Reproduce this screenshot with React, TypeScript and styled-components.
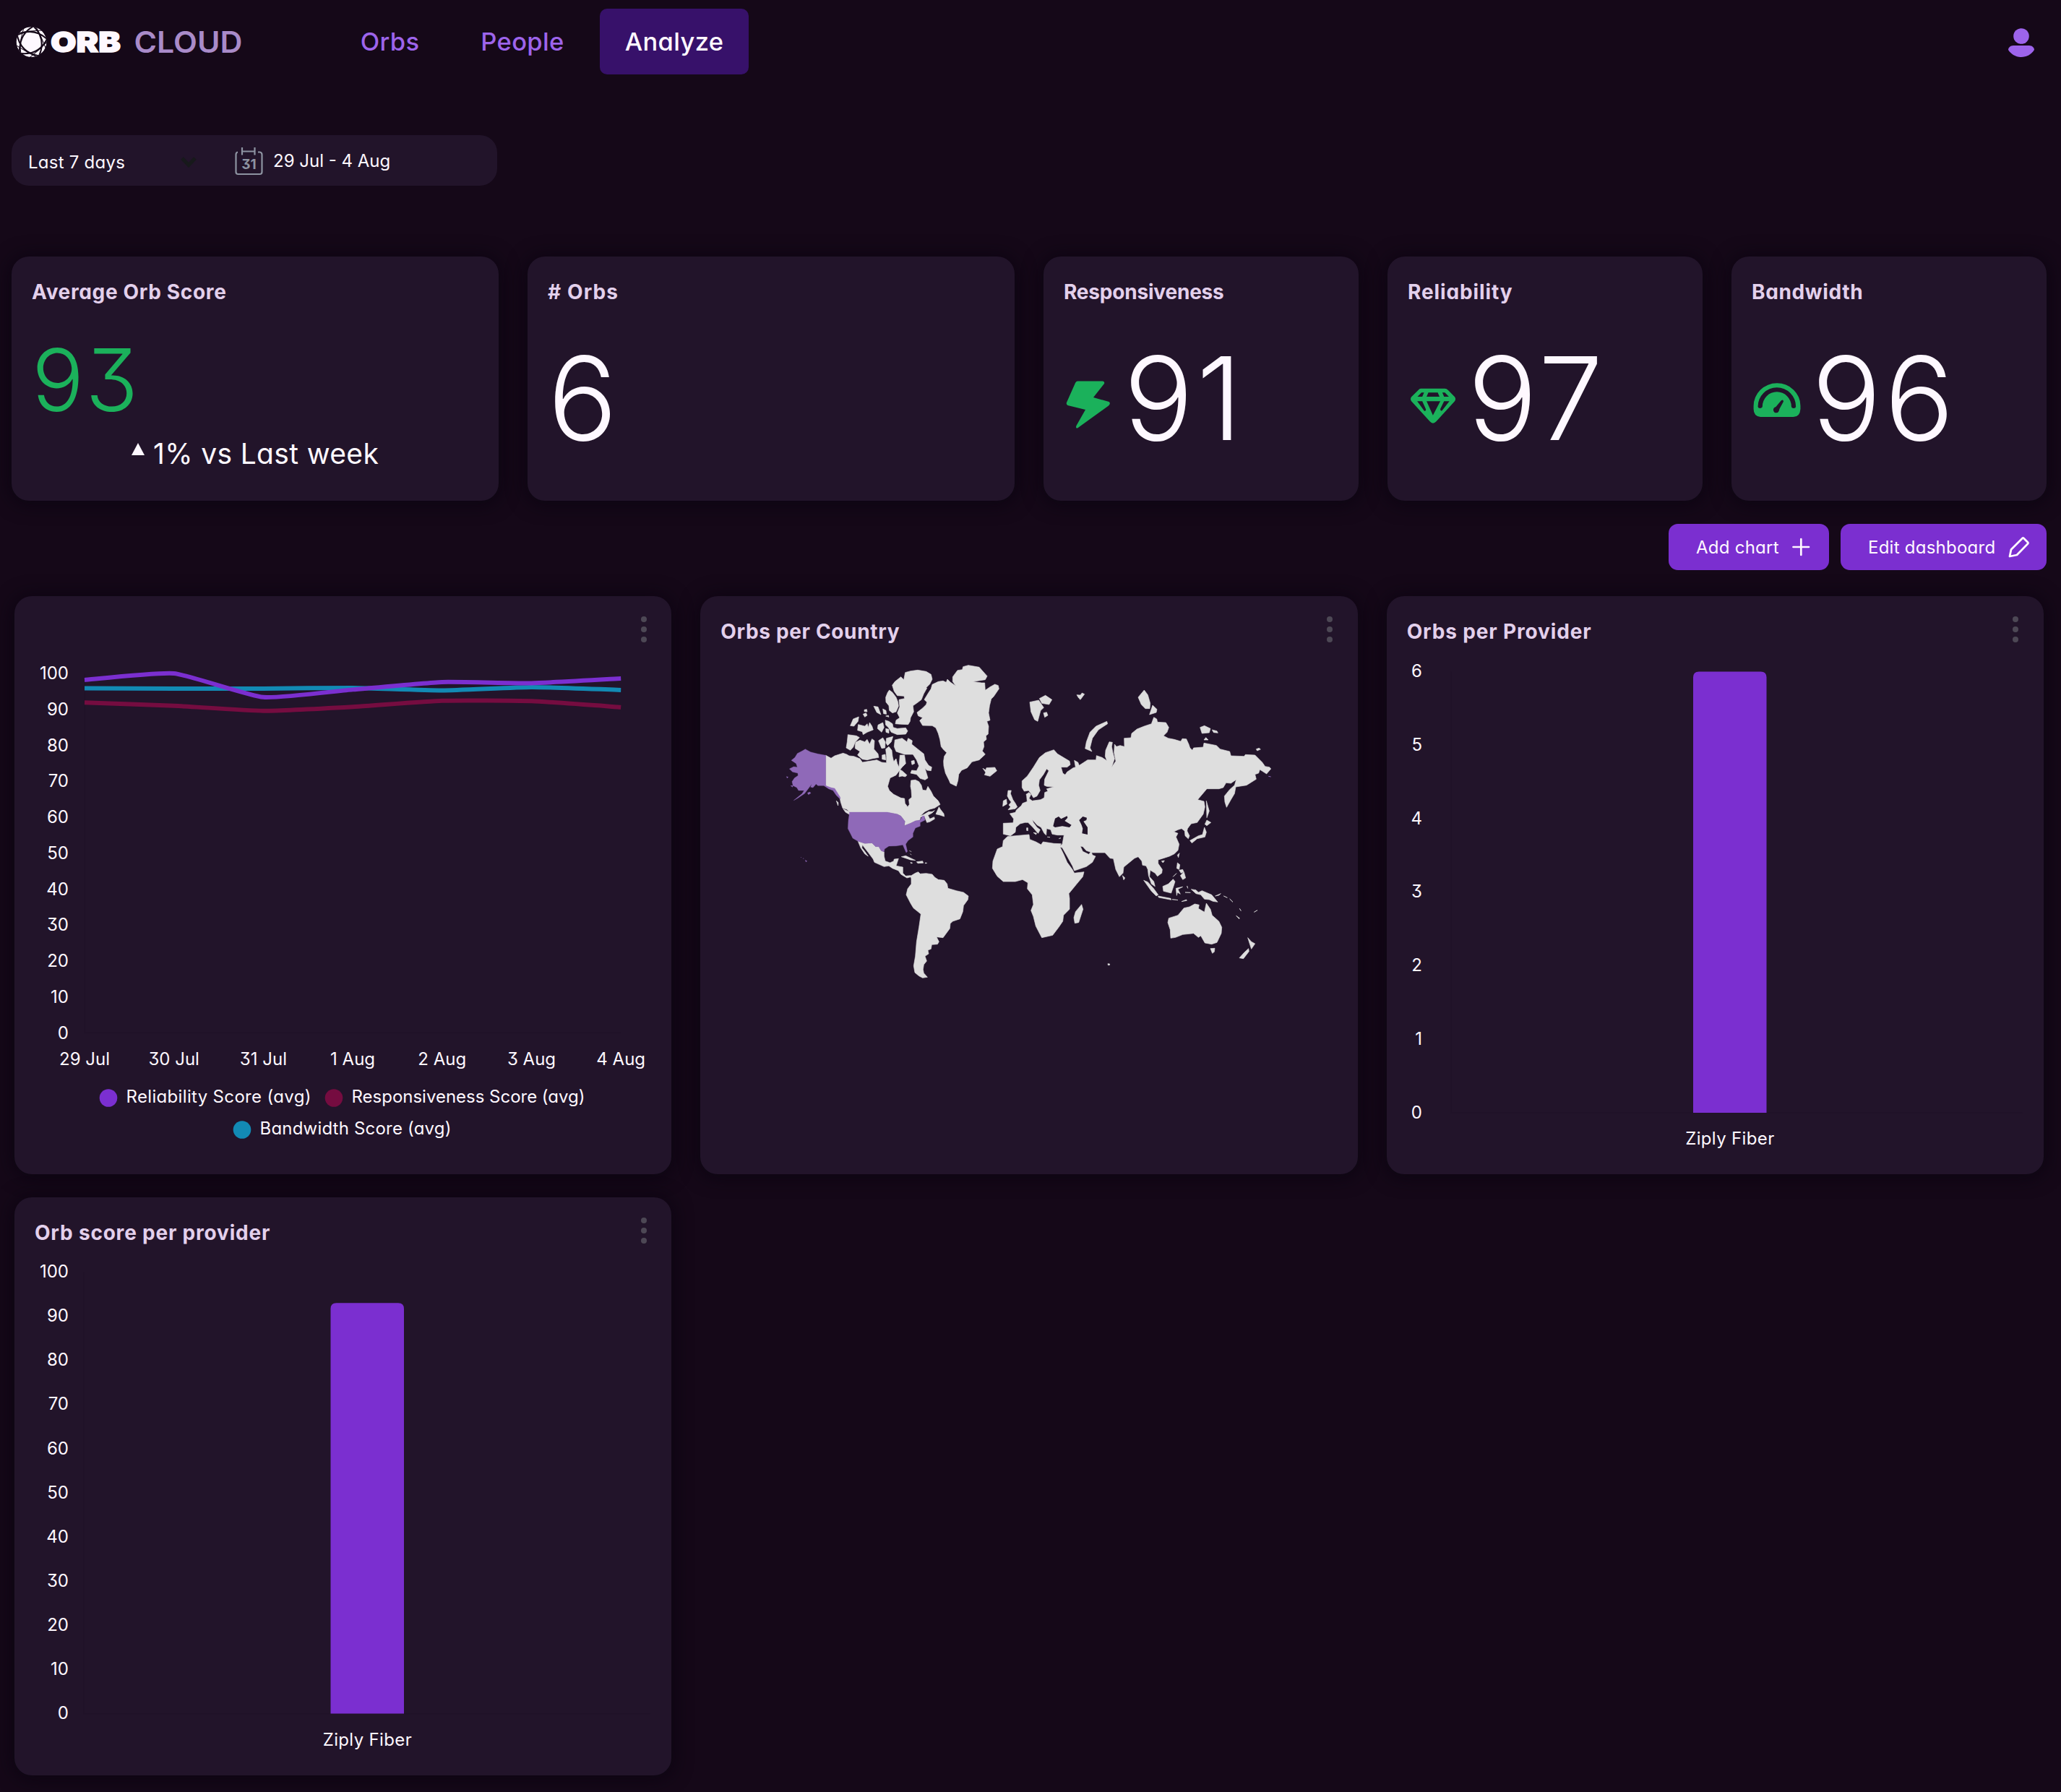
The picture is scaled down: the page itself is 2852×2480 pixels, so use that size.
import React from "react";
import styled, { createGlobalStyle } from "styled-components";

const color = {
  page: "#150818",
  card: "#22142a",
  text: "#fef8ff",
  title: "#e3d0ec",
  link: "#9d64eb",
  accent: "#7b2fd0",
  active: "#37116a",
  green: "#1bb15b",
  red: "#750c40",
  blue: "#128ab4",
  muted: "#4d4855",
};

const GlobalStyle = createGlobalStyle`
  * { box-sizing: border-box; }
  body {
    margin: 0;
    background: ${color.page};
    color: ${color.text};
    font-family: Inter, "Noto Sans", sans-serif;
    font-feature-settings: "cv11", "cv09";
  }
  svg { display: block; }
`;

const Page = styled.div`
  display: flex;
  flex-direction: column;
  width: 2852px;
  height: 2480px;
  overflow: hidden;
`;

const Header = styled.header`
  display: flex;
  align-items: center;
  height: 115px;
  padding: 0 36px 0 20px;
`;

const Nav = styled.nav`
  display: flex;
  flex: 1;
  margin-left: 123px;
`;

const NavLink = styled.a<{ $active?: boolean; $width: number }>`
  display: flex;
  align-items: center;
  justify-content: center;
  width: ${(p) => p.$width}px;
  height: 91px;
  border-radius: 10px;
  font-size: 34.5px;
  font-weight: 500;
  letter-spacing: 0.35px;
  color: ${(p) => (p.$active ? color.text : color.link)};
  background: ${(p) => (p.$active ? color.active : "transparent")};
`;

const Filters = styled.div`
  display: flex;
  align-items: center;
  width: 672px;
  height: 70px;
  margin: 72px 0 98px 16px;
  padding-left: 23px;
  border-radius: 24px;
  background: ${color.card};
  font-size: 24px;
`;

const RangeSelect = styled.div`
  display: flex;
  align-items: center;
  justify-content: space-between;
  width: 233px;
  margin-right: 53px;
  padding-top: 4px;
  letter-spacing: 0.25px;
`;

const DateRange = styled.div`
  display: flex;
  align-items: center;
  gap: 14px;
  padding-top: 1px;
`;

const Stats = styled.section`
  display: grid;
  grid-template-columns: 674px 674px 436px 436px 436px;
  gap: 40px;
  padding-left: 16px;
`;

const Card = styled.article<{ $height: number }>`
  display: flex;
  flex-direction: column;
  height: ${(p) => p.$height}px;
  border-radius: 24px;
  background: ${color.card};
  box-shadow: 0 2px 24px 4px rgba(8, 4, 14, 0.62);
`;

const StatCard = styled(Card)`
  padding: 29px 28px 0;
`;

const CardTitle = styled.h2<{ $spacing?: number }>`
  margin: 0;
  font-size: 28px;
  line-height: 40px;
  font-weight: 700;
  letter-spacing: ${(p) => p.$spacing ?? 0.65}px;
  white-space: nowrap;
  color: ${color.title};
`;

const ScoreValue = styled.div`
  margin-top: 43px;
  font-size: 120px;
  line-height: 118px;
  font-weight: 300;
  letter-spacing: 2px;
  color: ${color.green};
`;

const Delta = styled.div`
  display: flex;
  gap: 12px;
  margin: 19px 0 0 138px;
  font-size: 39px;
  line-height: 48px;
  letter-spacing: 0.35px;
`;

const Metric = styled.div`
  display: flex;
  margin-top: 49px;
  font-size: 160px;
  line-height: 156px;
  font-weight: 300;
  letter-spacing: 4.5px;
`;

const Actions = styled.div`
  display: flex;
  justify-content: flex-end;
  gap: 16px;
  margin: 32px 20px 36px 0;
`;

const Button = styled.button<{ $width: number }>`
  display: flex;
  align-items: center;
  justify-content: space-between;
  width: ${(p) => p.$width}px;
  height: 64px;
  padding: 0 23px 0 38px;
  border: 0;
  border-radius: 13px;
  background: ${color.accent};
  color: ${color.text};
  font: inherit;
  font-feature-settings: inherit;
  font-size: 24px;
  letter-spacing: 0.25px;
`;

const Charts = styled.section`
  display: grid;
  grid-template-columns: repeat(3, 1fr);
  gap: 32px 40px;
  padding: 0 24px 0 20px;
`;

const ChartHeader = styled.div`
  display: flex;
  justify-content: space-between;
  height: 84px;
  padding: 29px 34.5px 0 28px;
`;

const Menu = styled.div`
  display: flex;
  flex-direction: column;
  gap: 6px;
  margin-top: -1px;
`;

const Dot = styled.span`
  width: 8px;
  height: 8px;
  border-radius: 50%;
  background: ${color.muted};
`;

const ChartLabel = styled.text`
  font-size: 24px;
  fill: ${color.text};
`;

const MapFrame = styled.div`
  padding: 0 0 0 91px;
  margin-top: -19px;
`;

const Logo = () => (
  <svg width="320" height="60" viewBox="20 28 320 60">
    <defs>
      <clipPath id="disc">
        <circle r="21" />
      </clipPath>
    </defs>
    <g transform="translate(43.5 58)" clipPath="url(#disc)">
      <circle r="21" fill={color.text} />
      {[0, 72, 144, 216, 288].map((a) => (
        <g key={a} transform={`rotate(${a + 14})`} fill="none" stroke={color.page}>
          <path d="M-22,-4 Q-2,-22 22,-8" strokeWidth="2.1" />
          <path d="M-20,-8 Q-4,-15 10,-19" strokeWidth="1" />
        </g>
      ))}
    </g>
    <text x="70" y="72" fontSize="39" fontWeight="900" fill={color.text} stroke={color.text} strokeWidth="1.4" textLength="97" lengthAdjust="spacingAndGlyphs">ORB</text>
    <text x="185.500" y="72.5" fontSize="40.5" fontWeight="600" fill="#a98bc9" textLength="150" lengthAdjust="spacingAndGlyphs">CLOUD</text>
  </svg>
);

const UserIcon = () => (
  <svg width="38" height="42" viewBox="2778 37 38 42" fill={color.link}>
    <circle cx="2797" cy="50" r="10.8" />
    <path d="M2786,63 H2808 C2812,63 2815,66 2815,69 C2811,75.500 2804,79 2797,79 C2790,79 2783,75.500 2779,69 C2779,66 2782,63 2786,63Z" />
  </svg>
);

const CalendarIcon = () => (
  <svg width="39" height="40" viewBox="325 202 39 40" fill="none" stroke="#8d93a1" strokeWidth="2.2">
    <path d="M329,209.500 Q326.500,210 326.500,213 V237 Q326.500,240 329.500,240 H359.500 Q362.500,240 362.500,237 V213 Q362.500,210 359.500,209.500 H357 M335,203 V213.500 M335,208.500 H352.500 M352.500,203 V213.500" />
    <text x="344.500" y="232.500" fontSize="19" fontWeight="700" fill="#8d93a1" stroke="none" textAnchor="middle">31</text>
  </svg>
);

const ChevronIcon = () => (
  <svg width="22" height="16" viewBox="0 0 22 16">
    <path d="M2,3 L11,12.500 L20,3" fill="none" stroke="#17191b" strokeWidth="5" />
  </svg>
);

const BoltIcon = () => (
  <svg width="83" height="156" viewBox="28 118 83 156">
    <path d="M47,172.500 H82 Q85,173 84,176 L69,195 L90.500,201 Q93.500,203 90,206.500 L47,237.500 Q44,238 45.500,234 L58,212 L33.500,206 Q31,204.500 32,202 L44,175 Q45,172.500 47,172.500Z" fill={color.green} />
  </svg>
);

const DiamondIcon = () => (
  <svg width="83" height="156" viewBox="28 118 83 156">
    <g transform="translate(25 105) scale(.35075 .33333)" fill={color.green} fillRule="evenodd">
      <path d="M60,233 H155 Q162,233 168,240 L194,268 Q200,277 194,286 L121,370 Q108,384 96,370 L23,286 Q17,277 23,268 L50,240 Q55,233 60,233Z M63,250 L47,267 H66 L73,250Z M90,250 L83,267 H134 L127,250Z M145,250 L152,267 H171 L155,250Z M46,286 L74,326 Q82,328 80,319 L66,286Z M83,286 L108,344 L137,286Z M152,286 L137,318 Q137,328 144,325 L173,286Z" />
    </g>
  </svg>
);

const GaugeIcon = () => (
  <svg width="83" height="156" viewBox="28 118 83 156">
    <g transform="translate(-451 105) scale(.35075 .33333)" fill={color.green} fillRule="evenodd">
      <path d="M1465,211 A92,94 0 0 1 1558,305 V318 Q1556,351 1530,351 H1400 Q1373,348 1373,318 V305 A92,94 0 0 1 1465,211Z M1390,308 Q1391,315 1399,315 Q1408,314 1408,307 A57,60 0 0 1 1522,307 Q1523,315 1531,315 Q1539,315 1540,308 A75,79 0 0 0 1390,308Z M1482,283 L1461,309 Q1450,313 1451,323 Q1453,335 1464,334 Q1473,333 1475,318 L1491,287 Q1490,277 1482,283Z" />
    </g>
  </svg>
);

const PlusIcon = () => (
  <svg width="31" height="31" viewBox="0 0 31 31">
    <path d="M4.500,15 H26 M15.300,4 V26" stroke={color.text} strokeWidth="2.7" strokeLinecap="round" />
  </svg>
);

const PencilIcon = () => (
  <svg width="30" height="30" viewBox="0 0 30 30">
    <path d="M2,28 L4,18.500 L19.500,3 Q20.500,2 21.500,3 L27,8.500 Q28,9.500 27,10.500 L12,26 Z" fill="none" stroke={color.text} strokeWidth="2.8" strokeLinejoin="round" />
  </svg>
);

const LAND_WEST = [
  "M858,160 L910,152 918,137 885,100 840,92 818,98 815,110 795,113 775,140 775,160 788,178 765,162 753,150 748,163 735,157 715,160 690,172 685,190 672,210 657,235 668,245 665,255 650,270 627,288 632,302 650,310 638,322 650,342 690,343 705,352 715,375 722,400 727,430 735,440 750,455 740,470 737,490 738,510 745,540 760,570 765,582 790,594 797,570 800,545 812,528 835,518 855,493 885,485 910,462 898,448 905,430 903,410 915,400 913,385 922,378 924,345 917,325 930,320 924,290 928,260 935,232 945,222 967,190 964,176 950,171 930,182 910,196 908,165 895,165Z",
  "M578,122 L600,116 630,112 665,118 685,130 690,150 680,170 665,185 668,187 655,210 645,235 625,250 610,260 613,285 600,310 598,325 590,338 560,337 537,335 540,320 555,310 545,290 555,265 552,235 575,230 573,220 545,218 532,200 524,175 535,160 560,140 572,152Z",
  "M512,195 L525,205 540,225 548,245 550,262 540,285 525,290 512,280 510,260 498,245 497,225 505,205Z",
  "M495,320 L510,325 525,335 528,350 545,355 580,352 588,365 580,378 545,380 520,370 508,350 497,340Z",
  "M447,262 L465,265 477,297 460,288Z M485,273 L498,280 500,295 488,293Z M408,277 L418,275 420,285 408,284Z M403,295 L415,290 420,300 410,307Z M497,303 L508,300 510,307Z",
  "M350,343 L362,315 385,306 382,325 365,345Z M383,338 L410,345 420,335 425,350 430,330 440,345 445,360 420,370 403,380 400,368 380,362Z M465,340 L485,330 490,350 480,370 463,355Z M497,355 L510,358 510,374 498,370Z",
  "M340,380 L375,385 388,392 370,412 362,432 350,445 333,435 337,410Z",
  "M370,425 L372,412 390,403 410,410 420,400 430,420 440,398 450,405 448,440 465,460 468,475 440,480 420,485 400,482 380,465 390,450 370,437Z",
  "M467,405 L485,393 495,410 494,435 480,437Z M500,395 L527,388 520,410 505,425 498,415Z",
  "M535,402 L565,395 585,410 590,395 607,405 605,420 630,440 655,460 660,485 675,508 688,515 685,530 668,528 660,520 672,560 660,568 640,562 625,545 600,540 605,528 625,530 635,510 625,485 610,462 575,462 540,450 532,430Z",
  "M482,465 L495,462 497,485 482,482Z M603,490 L615,487 617,500 606,505Z M555,525 L565,530 585,548 578,555 565,552 552,555Z",
  "M248,466 L270,478 285,468 320,457 335,462 345,468 365,470 390,480 400,495 430,490 460,485 480,495 500,497 500,470 497,440 510,430 522,445 525,470 530,492 540,480 545,500 552,515 556,465 575,465 580,500 565,515 553,530 540,548 515,560 505,595 512,612 530,628 560,643 575,645 577,665 588,680 595,670 593,650 605,640 603,610 600,595 602,570 620,568 635,575 645,590 650,610 665,612 672,595 685,615 695,635 715,655 723,670 700,685 680,690 660,700 640,718 655,712 675,700 690,700 700,695 690,705 672,715 680,730 698,722 700,730 680,742 668,745 657,718 642,722 638,735 620,738 600,748 575,758 577,740 560,718 545,710 500,702 347,702 335,690 318,685 310,660 307,645 295,630 285,605 270,605 248,592Z",
  "M718,680 L724,690 738,708 740,720 722,714 705,710Z M320,688 L345,700 352,715 330,702Z M292,655 L300,662 299,675Z",
  "M382,823 L410,832 440,830 455,845 468,845 478,862 490,867 490,885 495,905 515,912 530,905 532,897 550,895 545,910 540,925 568,930 568,955 580,967 600,965 605,970 585,975 560,960 550,945 525,935 510,925 490,928 450,910 445,897 425,870 400,838 398,850 410,865 424,885 410,875 393,850Z",
  "M562,887 L580,883 620,902 600,900Z M625,908 L650,905 653,913 630,914Z M600,910 L608,913 602,915Z M660,912 L668,913 662,915Z M595,862 L604,866 M598,875 L604,879",
  "M600,967 L620,955 632,950 640,958 665,956 690,960 700,972 715,982 740,985 752,1000 755,1018 790,1028 820,1035 840,1050 838,1065 820,1090 817,1115 805,1145 775,1155 765,1165 763,1185 735,1223 708,1220 718,1240 712,1250 688,1252 685,1270 672,1275 675,1290 660,1300 667,1320 655,1335 652,1355 655,1370 670,1387 650,1390 635,1382 618,1368 613,1340 620,1300 625,1240 635,1180 643,1125 612,1100 600,1080 582,1045 588,1020 603,1000 603,978Z",
  "M900,520 L912,527 915,518 950,516 958,530 930,553 907,547 912,537Z",
  "M1005,612 L1018,612 1015,625 1025,650 1035,665 1043,680 1035,688 1005,692 1015,680 1008,672 1018,660 1010,650 1002,635Z M985,655 L998,648 1000,668 983,678Z",
];

const USA = [
  "M163,440 L185,452 215,460 248,466 248,592 270,600 285,603 308,640 308,648 292,632 278,612 260,605 240,592 215,592 208,585 195,600 185,598 190,585 175,605 160,625 130,645 115,653 150,625 158,612 135,612 128,600 112,592 108,575 118,560 133,550 132,540 110,535 97,522 115,513 130,515 125,500 105,487 120,475 130,458 150,448Z",
  "M172,622 L182,618 186,623 176,629Z M102,592 L112,592 110,598Z M85,554 L92,556 88,561Z M163,901 L170,905 166,909Z M144,889 L147,890Z M153,894 L157,895Z",
  "M347,702 L503,702 545,710 560,718 577,740 573,758 600,748 620,738 640,735 650,718 657,718 660,735 640,745 640,760 620,768 610,790 610,805 590,820 580,835 587,865 582,870 573,850 568,838 540,842 510,843 492,855 490,867 478,862 468,845 455,845 440,830 410,832 382,823 360,810 350,790 340,770 342,735Z",
];

const LAND_EAST = [
  "M25,748 L66,746 68,730 52,708 75,703 80,692 100,675 105,665 124,658 122,635 120,628 132,620 140,628 132,645 145,655 180,650 195,642 197,620 210,615 205,605 235,597 205,595 195,590 197,565 214,530 205,522 192,545 175,568 172,590 178,612 165,635 150,642 140,625 130,612 112,615 103,600 103,572 125,552 150,515 175,475 200,455 235,443 250,460 280,478 300,490 303,505 290,515 265,515 272,540 282,547 290,535 315,518 325,515 320,487 335,495 340,508 375,485 410,485 412,467 435,475 455,488 448,470 450,445 465,410 478,412 475,430 480,455 487,480 475,515 492,490 485,455 487,420 495,430 510,425 528,430 527,395 555,393 558,375 580,357 610,345 640,335 650,308 662,315 665,328 700,330 712,350 705,370 690,385 710,395 735,400 762,408 768,397 785,398 795,420 800,435 810,445 815,435 855,432 858,415 910,425 925,440 965,450 970,468 1025,470 1030,463 1070,465 1100,495 1112,512 1130,515 1136,522 1118,543 1090,525 1085,540 1070,545 1075,565 1035,590 990,597 985,625 970,650 952,682 945,660 943,635 965,608 985,590 992,567 970,582 950,580 938,600 920,605 870,605 832,650 858,657 862,680 855,710 830,745 805,750 790,770 788,780 798,800 793,812 780,800 778,780 765,770 750,775 733,783 750,790 742,805 755,835 750,860 735,875 715,885 690,893 668,900 668,915 685,940 683,955 665,968 655,955 635,943 632,970 650,990 655,1010 640,1000 628,965 625,940 618,925 603,922 600,905 585,887 570,893 525,930 522,955 507,970 492,940 482,895 468,893 447,870 395,870 370,862 355,845 345,843 355,865 380,877 390,865 395,880 408,885 395,910 370,928 320,945 312,925 290,885 270,850 258,845 270,835 277,797 250,797 228,793 222,775 205,770 203,797 195,790 182,765 165,755 145,732 150,745 165,765 178,775 170,790 165,785 148,765 128,745 115,745 95,750 77,765 75,785 55,800 25,793Z",
  "M42,803 L75,800 132,795 135,815 160,825 182,837 190,825 235,832 265,833 260,845 275,875 290,910 312,940 320,955 360,950 355,970 330,1000 297,1040 300,1060 300,1105 275,1130 272,1155 255,1180 230,1213 185,1223 178,1210 160,1175 150,1135 140,1110 150,1085 145,1045 125,1020 127,995 105,982 75,990 25,990 0,968 -20,935 -18,905 0,855 22,845 25,820Z",
  "M350,1085 L356,1105 338,1160 322,1163 318,1140 325,1115Z",
  "M135,245 L172,237 193,268 180,280 168,325 155,318 140,285Z M175,230 L200,217 227,235 215,255 185,250Z M192,290 L205,287 210,300 197,308Z M330,215 L345,216 352,207 362,212 345,235 338,228Z",
  "M455,325 L458,335 420,360 395,395 385,435 393,450 365,438 370,410 385,370 410,345Z",
  "M610,195 L625,215 635,250 633,272 615,272 598,255 585,225Z M645,258 L663,275 660,288 632,297Z",
  "M842,350 L860,343 885,355 880,372 850,375Z M892,360 L912,365 916,373 898,371Z M858,402 L866,392 876,402Z M1075,440 L1087,436 1093,441 1079,447Z",
  "M868,655 L875,680 880,697 870,725Z M870,735 L887,745 870,758 862,752Z M860,765 L868,785 862,805 830,812 808,830 800,820 835,800 852,795Z",
  "M748,880 L756,872 752,890Z M682,905 L694,903 688,912Z M520,965 L530,975 525,983Z",
  "M748,912 L758,920 755,940 745,935Z M760,965 L775,950 782,975 770,982Z M755,943 L770,940 774,950 763,955Z M730,970 L744,956Z",
  "M608,985 L625,992 650,1020 668,1045 660,1050 640,1030Z M668,1050 L720,1060 722,1066 670,1056Z M726,1064 L750,1067Z M765,1073 L785,1065 787,1069Z",
  "M687,1010 L710,1000 730,980 738,990 730,1015 722,1038 690,1030Z M742,1018 L770,1012 750,1022 760,1042 748,1035 745,1048Z M788,1008 L791,1018Z M780,1035 L802,1036Z",
  "M805,1022 L825,1025 835,1035 850,1028 890,1045 915,1075 895,1072 880,1065 860,1063 845,1045 825,1040Z M905,1050 L920,1047 928,1040Z M940,1050 L955,1057Z M965,1062 L978,1075Z",
  "M720,1225 L718,1190 708,1160 712,1142 750,1130 775,1100 798,1095 820,1083 838,1087 835,1102 860,1117 868,1080 885,1105 892,1130 920,1155 932,1180 930,1205 912,1243 890,1250 862,1245 845,1215 835,1222 815,1205 770,1210 740,1222Z",
  "M885,1268 L903,1267 901,1282 893,1288Z M1040,1223 L1055,1240 1070,1248 1055,1270 1050,1255Z M1043,1268 L1045,1280 1022,1310 1005,1307 1025,1285Z",
  "M992,1132 L1006,1142 1004,1145Z M1066,1117 L1080,1109Z M1006,1102 L1012,1112Z M459,1331 L467,1332 466,1337 460,1337Z M122,767 L127,767 127,779 122,778Z M150,787 L163,789 161,795Z M208,805 L219,806Z M256,812 L264,809Z",
];

const SEAS = [
  "M232,760 L240,728 255,720 265,730 290,718 292,725 280,738 308,755 300,765 270,760 240,765Z",
  "M340,735 L355,720 372,725 370,735 358,740 375,765 375,795 352,790 355,770 350,755Z",
];

const WorldMap = () => (
  <svg width="720" height="480" viewBox="0 0 2160 1440" strokeWidth="2" strokeLinejoin="round">
    <g fill="#dedede" stroke="#dedede">
      {LAND_WEST.map((d) => <path key={d} d={d} />)}
      <g transform="translate(960 0)">
        {LAND_EAST.map((d) => <path key={d} d={d} />)}
      </g>
    </g>
    <g transform="translate(960 0)" fill={color.card}>
      {SEAS.map((d) => <path key={d} d={d} />)}
    </g>
    <g fill="#8f69b8" stroke="#8f69b8" strokeWidth="1">
      {USA.map((d) => <path key={d} d={d} />)}
      <path d="M2086,553 L2096,555" strokeWidth="3" />
    </g>
  </svg>
);

const DAYS = ["29 Jul", "30 Jul", "31 Jul", "1 Aug", "2 Aug", "3 Aug", "4 Aug"];
const TENS = [100, 90, 80, 70, 60, 50, 40, 30, 20, 10, 0];

const SERIES = [
  { stroke: color.red, values: [91.9, 91, 89.6, 90.7, 92.4, 92.3, 90.6] },
  { stroke: color.blue, values: [95.9, 95.8, 95.8, 96, 95.3, 96.2, 95.4] },
  { stroke: color.accent, values: [98.2, 100, 93.4, 95.5, 97.6, 97.3, 98.6] },
];

const dayX = (i: number) => 97 + i * 123.7;
const scoreY = (v: number) => 604.4 - v * 4.974;

const smoothLine = (values: number[]) => {
  const pts = values.map((v, i) => [dayX(i), scoreY(v)]);
  const tangent = (i: number) => {
    const a = pts[Math.max(0, i - 1)];
    const b = pts[Math.min(pts.length - 1, i + 1)];
    return [(b[0] - a[0]) * 0.08, (b[1] - a[1]) * 0.08];
  };
  return pts.reduce((d, p, i) => {
    if (i === 0) return `M${p[0]},${p[1]}`;
    const q = pts[i - 1];
    const [ax, ay] = tangent(i - 1);
    const [bx, by] = tangent(i);
    return `${d} C${q[0] + ax},${q[1] + ay} ${p[0] - bx},${p[1] - by} ${p[0]},${p[1]}`;
  }, "");
};

const LEGEND = [
  { label: "Reliability Score (avg)", x: 130, y: 694, width: 256, fill: color.accent },
  { label: "Responsiveness Score (avg)", x: 442, y: 694, width: 323, fill: color.red },
  { label: "Bandwidth Score (avg)", x: 315, y: 738, width: 265, fill: color.blue },
];

const LineChart = () => (
  <svg width="909" height="716" viewBox="0 84 909 716">
    <path d="M97,107 V604.500 H839" fill="none" stroke="#201228" strokeWidth="2" />
    {TENS.map((t) => (
      <ChartLabel key={t} x="75" y={scoreY(t) + 8.2} textAnchor="end">{t}</ChartLabel>
    ))}
    {DAYS.map((d, i) => (
      <ChartLabel key={d} x={dayX(i)} y="649" textAnchor="middle">{d}</ChartLabel>
    ))}
    {SERIES.map((s) => (
      <path key={s.stroke} d={smoothLine(s.values)} fill="none" stroke={s.stroke} strokeWidth="6" />
    ))}
    {LEGEND.map((l) => (
      <g key={l.label}>
        <circle cx={l.x} cy={l.y + 0.5} r="12.3" fill={l.fill} />
        <ChartLabel x={l.x + 24.500} y={l.y + 7} textLength={l.width}>{l.label}</ChartLabel>
      </g>
    ))}
  </svg>
);

interface BarChartProps {
  ticks: number[];
  value: number;
  axisX: number;
  labelX: number;
  top: number;
  bottom: number;
  barX: number;
}

const BarChart = ({ ticks, value, axisX, labelX, top, bottom, barX }: BarChartProps) => {
  const y = (v: number) => bottom - ((bottom - top) * v) / ticks[0];
  const barTop = y(value);
  return (
    <svg width="909" height="716" viewBox="0 84 909 716">
      <path d={`M${axisX},${top} V${bottom} H880`} fill="none" stroke="#201228" strokeWidth="2" />
      {ticks.map((t) => (
        <ChartLabel key={t} x={labelX} y={y(t) + 7.6} textAnchor="end">{t}</ChartLabel>
      ))}
      <path d={`M${barX},${bottom} V${barTop + 8} q0,-8 8,-8 h85.500 q8,0 8,8 V${bottom}Z`} fill={color.accent} />
      <ChartLabel x={barX + 50.7} y={bottom + 44.3} textAnchor="middle" textLength="123">Ziply Fiber</ChartLabel>
    </svg>
  );
};

interface ChartCardProps {
  title?: string;
  spacing?: number;
  children: React.ReactNode;
}

const ChartCard = ({ title, spacing, children }: ChartCardProps) => (
  <Card $height={800}>
    <ChartHeader>
      <CardTitle $spacing={spacing}>{title}</CardTitle>
      <Menu>
        <Dot />
        <Dot />
        <Dot />
      </Menu>
    </ChartHeader>
    {children}
  </Card>
);

export default function App() {
  return (
    <Page>
      <GlobalStyle />
      <Header>
        <Logo />
        <Nav>
          <NavLink $width={153}>Orbs</NavLink>
          <NavLink $width={214}>People</NavLink>
          <NavLink $width={206} $active>Analyze</NavLink>
        </Nav>
        <UserIcon />
      </Header>
      <Filters>
        <RangeSelect>
          Last 7 days
          <ChevronIcon />
        </RangeSelect>
        <DateRange>
          <CalendarIcon />
          29 Jul - 4 Aug
        </DateRange>
      </Filters>
      <Stats>
        <StatCard $height={338}>
          <CardTitle>Average Orb Score</CardTitle>
          <ScoreValue>93</ScoreValue>
          <Delta>
            <svg width="18" height="30" viewBox="0 0 18 30">
              <path d="M9,9 L18,26 H0Z" fill={color.text} />
            </svg>
            1% vs Last week
          </Delta>
        </StatCard>
        <StatCard $height={338}>
          <CardTitle $spacing={1.1}># Orbs</CardTitle>
          <Metric>6</Metric>
        </StatCard>
        <StatCard $height={338}>
          <CardTitle $spacing={-0.2}>Responsiveness</CardTitle>
          <Metric><BoltIcon />91</Metric>
        </StatCard>
        <StatCard $height={338}>
          <CardTitle $spacing={0.9}>Reliability</CardTitle>
          <Metric><DiamondIcon />97</Metric>
        </StatCard>
        <StatCard $height={338}>
          <CardTitle>Bandwidth</CardTitle>
          <Metric><GaugeIcon />96</Metric>
        </StatCard>
      </Stats>
      <Actions>
        <Button $width={222}>Add chart<PlusIcon /></Button>
        <Button $width={285}>Edit dashboard<PencilIcon /></Button>
      </Actions>
      <Charts>
        <ChartCard>
          <LineChart />
        </ChartCard>
        <ChartCard title="Orbs per Country">
          <MapFrame>
            <WorldMap />
          </MapFrame>
        </ChartCard>
        <ChartCard title="Orbs per Provider" spacing={0.85}>
          <BarChart ticks={[6, 5, 4, 3, 2, 1, 0]} value={6} axisX={89} labelX={49} top={104.500} bottom={715} barX={424} />
        </ChartCard>
        <ChartCard title="Orb score per provider" spacing={0.8}>
          <BarChart ticks={TENS} value={93} axisX={96} labelX={75} top={103.500} bottom={714.5} barX={437.500} />
        </ChartCard>
      </Charts>
    </Page>
  );
}
